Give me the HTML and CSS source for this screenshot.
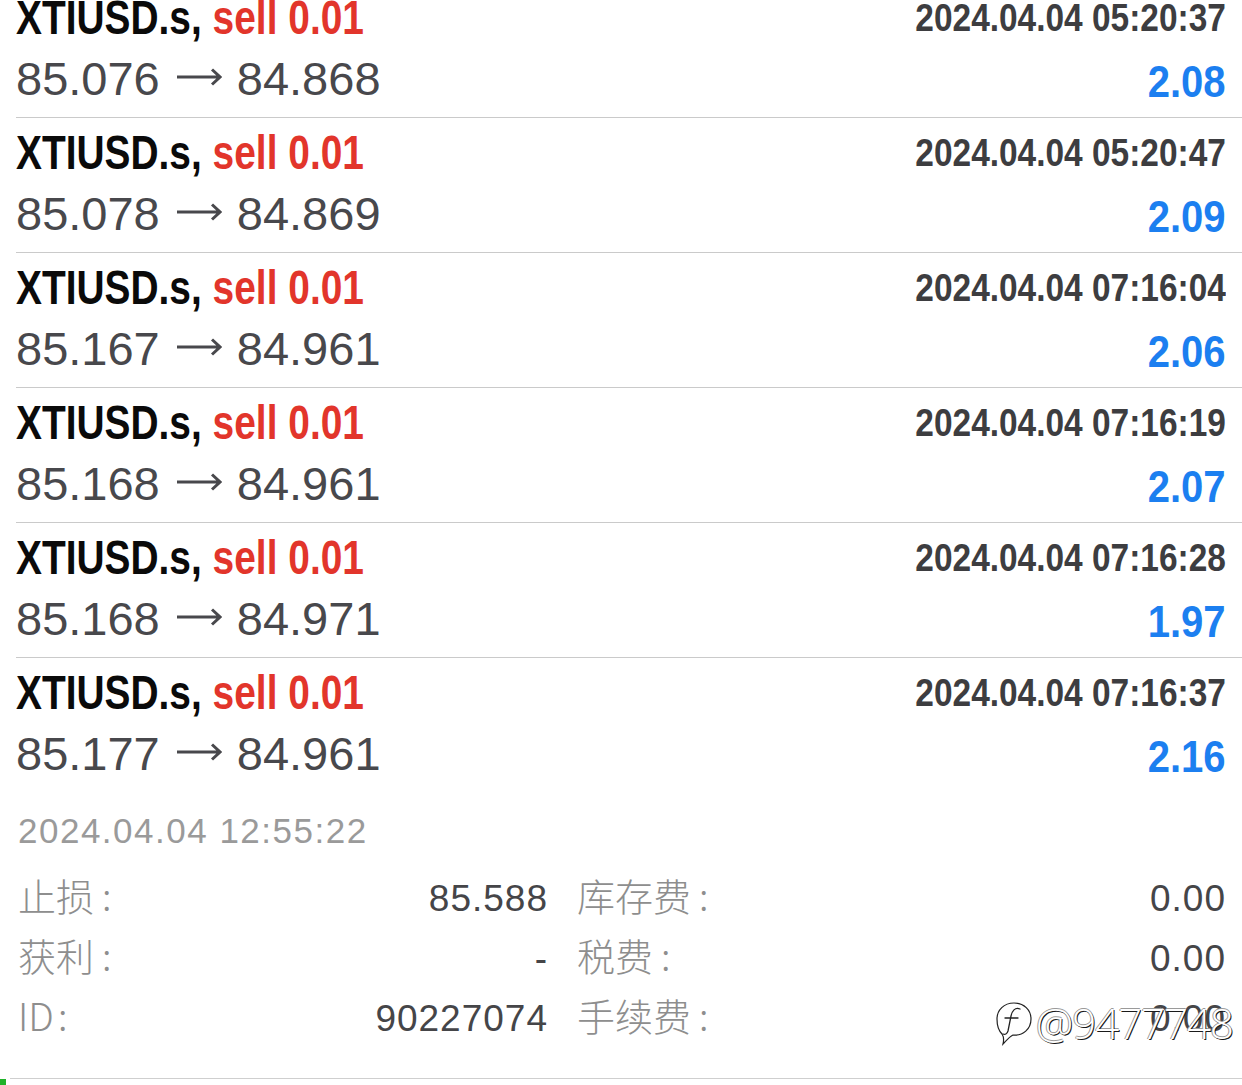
FILE: index.html
```html
<!DOCTYPE html>
<html lang="zh">
<head>
<meta charset="utf-8">
<title>History</title>
<link rel="stylesheet" href="styles.css">
</head>
<body>
<div class="page">
  <ul class="deals">
    <li class="deal">
      <div class="title"><span class="cond-l"><span class="sym">XTIUSD.s,</span> <span class="side">sell 0.01</span></span></div>
      <div class="time"><span class="cond-r">2024.04.04 05:20:37</span></div>
      <div class="prices">85.076<svg class="arrow" width="46" height="20" viewBox="0 0 46 20" aria-label="→"><path d="M1 10 H44 M36 2.5 L44 10 L36 17.5" fill="none" stroke="#48484c" stroke-width="3"/></svg>84.868</div>
      <div class="profit"><span class="cond-p">2.08</span></div>
    </li>
    <li class="deal">
      <div class="title"><span class="cond-l"><span class="sym">XTIUSD.s,</span> <span class="side">sell 0.01</span></span></div>
      <div class="time"><span class="cond-r">2024.04.04 05:20:47</span></div>
      <div class="prices">85.078<svg class="arrow" width="46" height="20" viewBox="0 0 46 20" aria-label="→"><path d="M1 10 H44 M36 2.5 L44 10 L36 17.5" fill="none" stroke="#48484c" stroke-width="3"/></svg>84.869</div>
      <div class="profit"><span class="cond-p">2.09</span></div>
    </li>
    <li class="deal">
      <div class="title"><span class="cond-l"><span class="sym">XTIUSD.s,</span> <span class="side">sell 0.01</span></span></div>
      <div class="time"><span class="cond-r">2024.04.04 07:16:04</span></div>
      <div class="prices">85.167<svg class="arrow" width="46" height="20" viewBox="0 0 46 20" aria-label="→"><path d="M1 10 H44 M36 2.5 L44 10 L36 17.5" fill="none" stroke="#48484c" stroke-width="3"/></svg>84.961</div>
      <div class="profit"><span class="cond-p">2.06</span></div>
    </li>
    <li class="deal">
      <div class="title"><span class="cond-l"><span class="sym">XTIUSD.s,</span> <span class="side">sell 0.01</span></span></div>
      <div class="time"><span class="cond-r">2024.04.04 07:16:19</span></div>
      <div class="prices">85.168<svg class="arrow" width="46" height="20" viewBox="0 0 46 20" aria-label="→"><path d="M1 10 H44 M36 2.5 L44 10 L36 17.5" fill="none" stroke="#48484c" stroke-width="3"/></svg>84.961</div>
      <div class="profit"><span class="cond-p">2.07</span></div>
    </li>
    <li class="deal">
      <div class="title"><span class="cond-l"><span class="sym">XTIUSD.s,</span> <span class="side">sell 0.01</span></span></div>
      <div class="time"><span class="cond-r">2024.04.04 07:16:28</span></div>
      <div class="prices">85.168<svg class="arrow" width="46" height="20" viewBox="0 0 46 20" aria-label="→"><path d="M1 10 H44 M36 2.5 L44 10 L36 17.5" fill="none" stroke="#48484c" stroke-width="3"/></svg>84.971</div>
      <div class="profit"><span class="cond-p">1.97</span></div>
    </li>
    <li class="deal">
      <div class="title"><span class="cond-l"><span class="sym">XTIUSD.s,</span> <span class="side">sell 0.01</span></span></div>
      <div class="time"><span class="cond-r">2024.04.04 07:16:37</span></div>
      <div class="prices">85.177<svg class="arrow" width="46" height="20" viewBox="0 0 46 20" aria-label="→"><path d="M1 10 H44 M36 2.5 L44 10 L36 17.5" fill="none" stroke="#48484c" stroke-width="3"/></svg>84.961</div>
      <div class="profit"><span class="cond-p">2.16</span></div>
    </li>
  </ul>

  <div class="details">
    <div class="opened">2024.04.04 12:55:22</div>
    <div class="grid">
      <div class="cell"><span class="lbl">止损<span class="colon">:</span></span><span class="val">85.588</span></div>
      <div class="cell"><span class="lbl">库存费<span class="colon">:</span></span><span class="val">0.00</span></div>
      <div class="cell"><span class="lbl">获利<span class="colon">:</span></span><span class="val">-</span></div>
      <div class="cell"><span class="lbl">税费<span class="colon">:</span></span><span class="val">0.00</span></div>
      <div class="cell"><span class="lbl">ID<span class="colon id-colon">:</span></span><span class="val">90227074</span></div>
      <div class="cell"><span class="lbl">手续费<span class="colon">:</span></span><span class="val">0.00</span></div>
    </div>
  </div>

  <div class="footer">
    <span class="mark"></span>
    <div class="rule"></div>
  </div>

  <div class="watermark">
    <svg class="wm-logo" width="40" height="48" viewBox="0 0 40 48">
      <path d="M20 4 C30 4 37 11 37 20 C37 30 29 37 19 36 C15 38 12 42 9 45 C10 41 10 38 8 35 C4 31 3 26 3 20 C3 11 10 4 20 4 Z" fill="#fff" stroke="#222" stroke-width="1.2"/>
      <path d="M26 10 C21 8 18 12 17 17 L14 32 C13 35 11 36 9 35 M11 19 L24 19" fill="none" stroke="#222" stroke-width="1.3" stroke-linecap="round"/>
    </svg>
    <span class="wm-text">@9477748</span>
  </div>
</div>
</body>
</html>
```

FILE: styles.css
```css
* { box-sizing: border-box; }

html, body {
  margin: 0;
  padding: 0;
  background: #ffffff;
}

body {
  width: 1242px;
  height: 1085px;
  overflow: hidden;
  font-family: "Liberation Sans", Arial, sans-serif;
}

.page {
  position: relative;
  width: 1242px;
  height: 1085px;
  overflow: hidden;
}

.deals {
  list-style: none;
  margin: -17px 0 0 0;
  padding: 0;
}

.deal {
  display: grid;
  grid-template-columns: 1fr auto;
  grid-template-rows: 60px 62px;
  height: 135px;
  margin-left: 16px;
  padding: 5px 16px 0 0;
  border-bottom: 1px solid #cacaca;
}

.deal:last-child {
  border-bottom: none;
}

.title {
  font-weight: 700;
  font-size: 48px;
  line-height: 60px;
  white-space: nowrap;
}

.cond-l {
  display: inline-block;
  transform: scaleX(0.81);
  transform-origin: left center;
}

.sym { color: #0a0a0a; }
.side { color: #e2352b; }

.time {
  font-weight: 700;
  font-size: 38px;
  line-height: 60px;
  color: #3d3d40;
  text-align: right;
  white-space: nowrap;
}

.cond-r {
  display: inline-block;
  transform: scaleX(0.88);
  transform-origin: right center;
}

.prices {
  font-size: 47px;
  line-height: 62px;
  color: #48484c;
  white-space: nowrap;
}

.arrow {
  margin: 0 15px 0 16px;
  vertical-align: 8px;
}

.profit {
  font-weight: 700;
  font-size: 45px;
  line-height: 68px;
  color: #1c7ff0;
  text-align: right;
  white-space: nowrap;
}

.cond-p {
  display: inline-block;
  transform: scaleX(0.89);
  transform-origin: right center;
}

.details {
  padding: 18px 16px 0 18px;
}

.opened {
  font-size: 35px;
  line-height: 40px;
  letter-spacing: 1.5px;
  color: #9a9a9a;
}

.grid {
  margin-top: 18px;
  display: grid;
  grid-template-columns: 530px 1fr;
  grid-auto-rows: 60px;
  column-gap: 29px;
}

.cell {
  display: flex;
  justify-content: space-between;
  align-items: center;
}

.lbl {
  font-family: "Noto Sans CJK SC", "Liberation Sans", sans-serif;
  font-weight: 300;
  font-size: 38px;
  line-height: 48px;
  margin-bottom: 9px;
  color: #8e8e8e;
}

.colon {
  padding-left: 8px;
}

.id-colon {
  padding-left: 4px;
}

.val {
  font-size: 37px;
  letter-spacing: 1px;
  color: #454548;
}

.footer {
  margin-top: 29px;
  display: flex;
  flex-direction: column;
}

.rule {
  margin-left: 10px;
  height: 1px;
  background: #cfcfcf;
}

.mark {
  order: 1;
  width: 6px;
  height: 8px;
  background: #20b22a;
}

.watermark {
  position: absolute;
  left: 994px;
  top: 998px;
  display: flex;
  align-items: center;
  gap: 2px;
}

.wm-text {
  font-family: "Open Sans", "DejaVu Sans", sans-serif;
  font-weight: 300;
  font-size: 42px;
  line-height: 50px;
  color: #ffffff;
  letter-spacing: -1px;
  text-shadow: 1px 1px 0 #1a1a1a, -1px 0 0 #9a9a9a, 0 -1px 0 #9a9a9a;
}
```
